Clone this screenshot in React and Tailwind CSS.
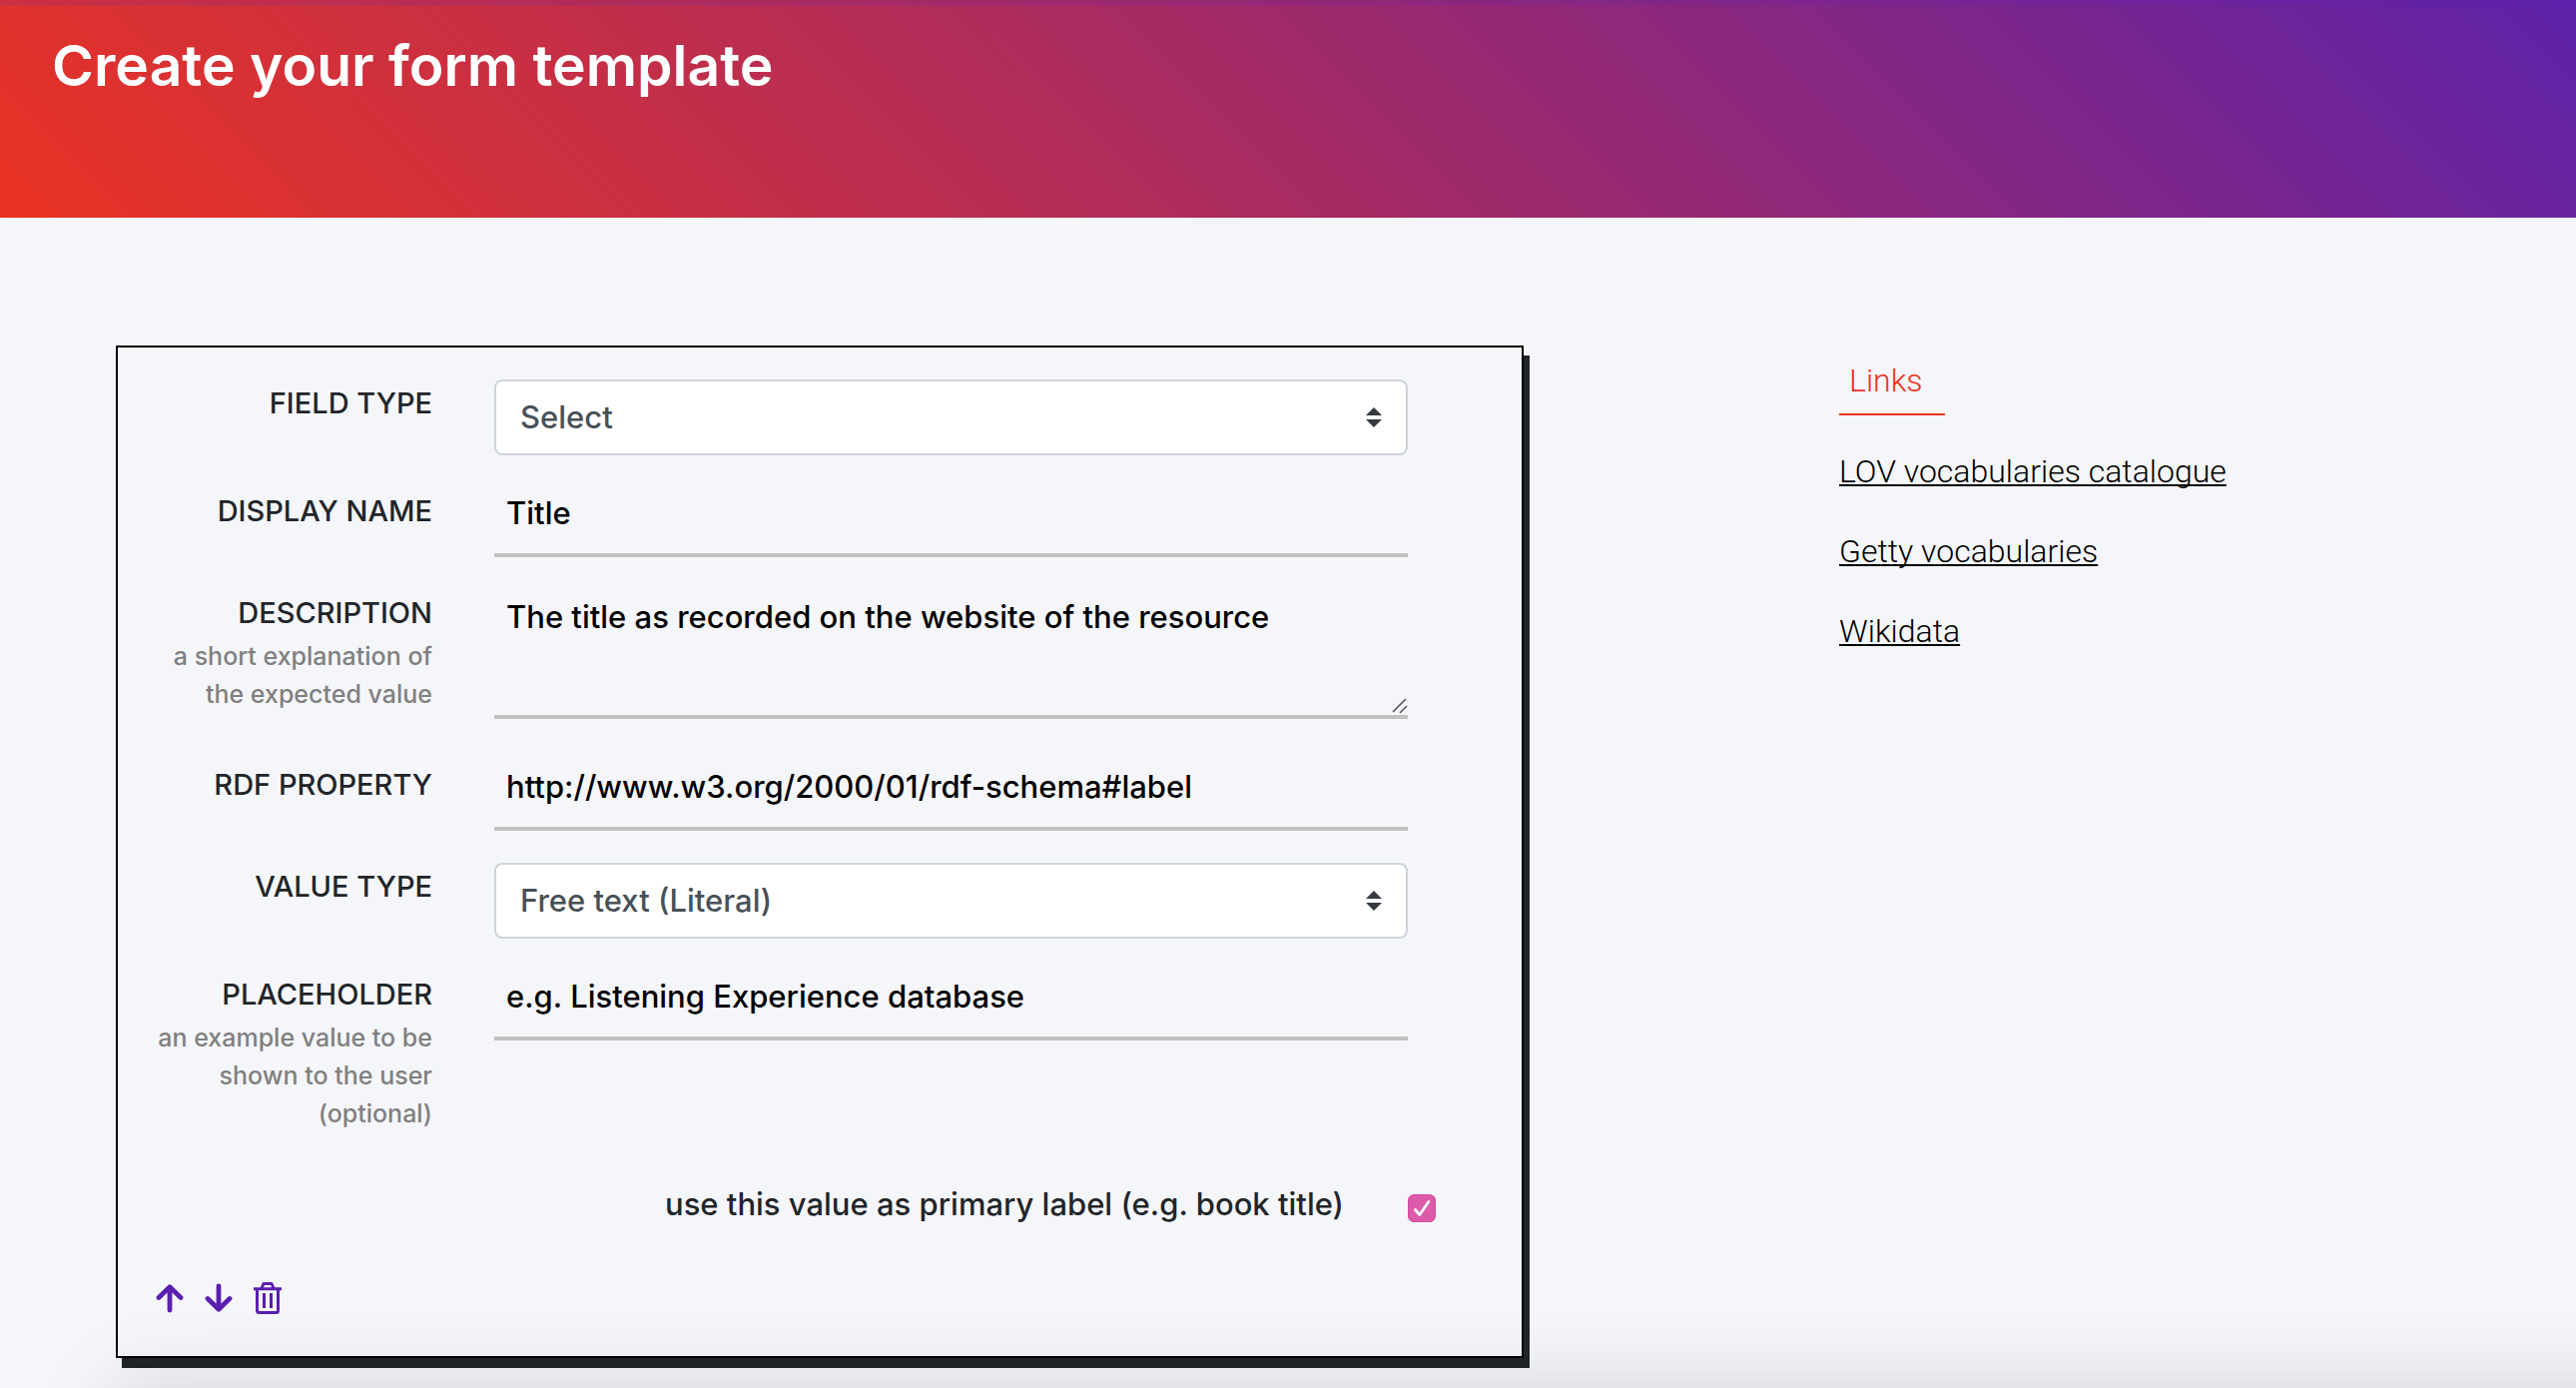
import React, { useState } from 'react';

const textStyle = 'text-[31px] font-medium text-black';

function Row({ id, label, help, children }) {
  return (
    <div className="grid grid-cols-[279fr_915fr] gap-x-[62px]">
      <label htmlFor={id} className="text-right">
        <span className="block text-[29px] leading-[48px] font-medium text-[#212529] uppercase">{label}</span>
        {help && <span className="block text-[25px] leading-[38px] font-medium text-[#808080]">{help}</span>}
      </label>
      <div>{children}</div>
    </div>
  );
}

function SelectField({ id, options }) {
  return (
    <div className="relative">
      <select
        id={id}
        className="block h-[76px] w-full appearance-none rounded-lg border-2 border-[#ced4da] bg-white px-6 text-[31px] font-medium text-[#495057]"
      >
        {options.map((o) => (
          <option key={o}>{o}</option>
        ))}
      </select>
      <svg viewBox="0 0 4 5" className="pointer-events-none absolute top-7 right-[26px] h-5 w-4 fill-[#343a40]" aria-hidden="true">
        <path d="M2 0L0 2h4zm0 5L0 3h4z" />
      </svg>
    </div>
  );
}

function TextField({ id, value }) {
  return (
    <input
      id={id}
      type="text"
      defaultValue={value}
      className={`block h-[70px] w-full border-b-4 border-[#c0c0c0] bg-transparent px-3 pb-4 outline-none ${textStyle}`}
    />
  );
}

function IconButton({ label, children }) {
  return (
    <button type="button" aria-label={label} className="text-[#5a1faf]">
      <svg viewBox="0 0 28 32" className="h-8 w-7" fill="none" stroke="currentColor" aria-hidden="true">
        {children}
      </svg>
    </button>
  );
}

function FieldCard() {
  const [primary, setPrimary] = useState(true);
  return (
    <form className="border-2 border-black px-9 pt-8 pb-[42px] shadow-[6px_10px_0_#212529]">
      <div className="flex flex-col gap-y-8 pr-[78px]">
        <Row id="field-type" label="Field type">
          <SelectField id="field-type" options={['Select']} />
        </Row>
        <Row id="display-name" label="Display name">
          <TextField id="display-name" value="Title" />
        </Row>
        <Row id="description" label="Description" help="a short explanation of the expected value">
          <div className="relative mb-[10px]">
            <textarea
              id="description"
              defaultValue="The title as recorded on the website of the resource"
              className={`block h-[130px] w-full resize-none border-b-4 border-[#c0c0c0] bg-transparent px-3 py-1 leading-[48px] outline-none ${textStyle}`}
            />
            <svg viewBox="0 0 16 16" className="pointer-events-none absolute right-0 bottom-1 h-4 w-4 stroke-[#5c5c5c]" fill="none" aria-hidden="true">
              <path d="M1.5 12.5l12-12M8.5 13.5l6-6" strokeWidth="1.7" strokeLinecap="round" />
            </svg>
          </div>
        </Row>
        <Row id="rdf-property" label="RDF property">
          <TextField id="rdf-property" value="http://www.w3.org/2000/01/rdf-schema#label" />
        </Row>
        <Row id="value-type" label="Value type">
          <SelectField id="value-type" options={['Free text (Literal)']} />
        </Row>
        <Row id="placeholder" label="Placeholder" help="an example value to be shown to the user (optional)">
          <TextField id="placeholder" value="e.g. Listening Experience database" />
        </Row>
      </div>

      <div className="mt-12 flex items-center justify-end pr-[50px]">
        <label htmlFor="primary" className="mr-16 text-[31px] leading-[48px] font-medium text-[#212529]">
          use this value as primary label (e.g. book title)
        </label>
        <span className="relative mt-2 block h-7 w-7">
          <input
            id="primary"
            type="checkbox"
            checked={primary}
            onChange={(e) => setPrimary(e.target.checked)}
            className="block h-7 w-7 appearance-none rounded-md border border-[#d64c9f] bg-white checked:bg-[#dc5aaa]"
          />
          {primary && (
            <svg viewBox="0 0 28 28" className="pointer-events-none absolute inset-0 h-7 w-7" fill="none" aria-hidden="true">
              <path d="M7.5 15.5l4.3 5L20.8 7.5" stroke="#fff" strokeWidth="2.8" strokeLinecap="round" strokeLinejoin="round" />
            </svg>
          )}
        </span>
      </div>

      <div className="mt-[54px] flex gap-[21px] pl-0.5">
        <IconButton label="Move up">
          <path d="M3 15.5L14 4.8l11 10.7M14 5v23" strokeWidth="4.8" strokeLinecap="round" strokeLinejoin="round" />
        </IconButton>
        <IconButton label="Move down">
          <path d="M3 16.5L14 27.2l11-10.7M14 27V4" strokeWidth="4.8" strokeLinecap="round" strokeLinejoin="round" />
        </IconButton>
        <IconButton label="Delete">
          <path d="M0 6.7h28M8 6l2-4.5h8L20 6M3.5 8v20.5q0 2 2 2h17q2 0 2-2V8" strokeWidth="3" strokeLinejoin="round" />
          <path d="M10.5 11v15M17.5 11v15" strokeWidth="3" />
        </IconButton>
      </div>
    </form>
  );
}

const links = ['LOV vocabularies catalogue', 'Getty vocabularies', 'Wikidata'];

export default function App() {
  return (
    <div className="min-h-screen bg-[#f5f6fa] font-['Inter',sans-serif]">
      <div className="h-1.5 bg-[linear-gradient(45deg,#cc3042,#5c20ab)]" />
      <header className="bg-[linear-gradient(45deg,#ea3323,#5e22a8)] px-[52px] pt-6 pb-[116px]">
        <h1 className="text-[57px] leading-[72px] font-semibold text-white">Create your form template</h1>
      </header>

      <main className="grid grid-cols-[1410fr_622fr] items-start gap-x-[316px] px-[116px] pt-32 pb-[30px]">
        <FieldCard />
        <aside className="pt-[11px] font-['Roboto',sans-serif] text-[32px] leading-[48px] font-light">
          <h2 className="inline-block border-b-2 border-[#ea3323] pr-[22px] pb-[9px] pl-[10px] text-[#ea3323]">Links</h2>
          <ul className="mt-8 flex flex-col gap-8">
            {links.map((l) => (
              <li key={l}>
                <a href="#" className="text-black underline decoration-2 underline-offset-2 [text-decoration-skip-ink:none]">
                  {l}
                </a>
              </li>
            ))}
          </ul>
        </aside>
      </main>

      <div className="pointer-events-none fixed top-full -right-32 left-[116px] h-40 shadow-[0_0_80px_rgba(0,0,0,0.15)]" />
    </div>
  );
}
